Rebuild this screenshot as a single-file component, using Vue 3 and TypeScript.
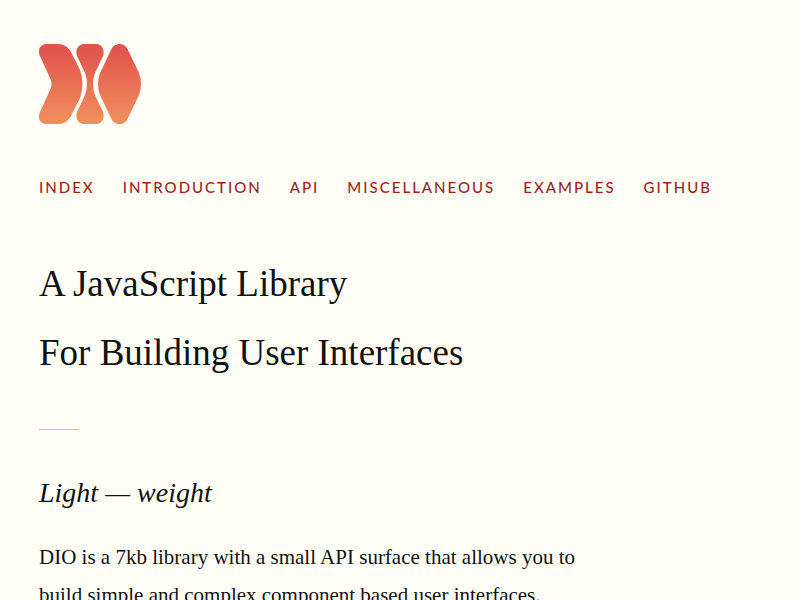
<script setup lang="ts">
interface NavItem {
  label: string
  href: string
}

const navItems: NavItem[] = [
  { label: 'Index', href: '#index' },
  { label: 'Introduction', href: '#introduction' },
  { label: 'API', href: '#api' },
  { label: 'Miscellaneous', href: '#miscellaneous' },
  { label: 'Examples', href: '#examples' },
  { label: 'GitHub', href: '#github' },
]
</script>

<template>
  <div class="page">
    <header>
      <a class="logo" href="#index" aria-label="DIO">
        <svg width="102" height="80" viewBox="0 0 102 80" aria-hidden="true">
          <defs>
            <linearGradient id="logo-fill" gradientUnits="userSpaceOnUse" x1="0" y1="0" x2="0" y2="80">
              <stop offset="0.1" stop-color="#e1564f" />
              <stop offset="0.95" stop-color="#f08e5b" />
            </linearGradient>
          </defs>
          <g fill="url(#logo-fill)">
            <path d="M8 0H19C25 0 29 3 32 8L41 26Q46 40 41 54L32 72C29 77 25 80 19 80H8C1 80-2 74 1 68L11 46Q14 40 11 34L1 12C-2 6 1 0 8 0Z" />
            <path d="M45 0H57C63 0 66 6 64 12L56 29Q52 40 56 51L64 68C66 74 63 80 57 80H45C39 80 36 74 38 68L46 51Q50 40 46 29L38 12C36 6 39 0 45 0Z" />
            <path d="M72 6C75-2 86-2 89 6L100 29Q104 40 100 51L89 74C86 82 75 82 72 74L61 51Q57 40 61 29Z" />
          </g>
        </svg>
      </a>
      <nav aria-label="Main">
        <a v-for="item in navItems" :key="item.label" :href="item.href">{{ item.label }}</a>
      </nav>
    </header>
    <main>
      <h1>A JavaScript Library<br />For Building User Interfaces</h1>
      <hr />
      <h2>Light — weight</h2>
      <p>
        DIO is a 7kb library with a small API surface that allows you to
        build simple and complex component based user interfaces.
      </p>
    </main>
  </div>
</template>

<style>
body {
  margin: 0;
  background: #fffff8;
}
</style>

<style scoped>
.page {
  padding: 44px 39px 0;
  color: #111;
  font-family: Palatino, "Palatino Linotype", "Liberation Serif", serif;
}

.logo,
.logo svg {
  display: block;
}

.logo {
  width: fit-content;
}

nav {
  display: flex;
  flex-wrap: wrap;
  gap: 28px;
  margin-top: 51px;
  font: 500 15px/24px "Gill Sans", Lato, sans-serif;
  letter-spacing: 2px;
  text-transform: uppercase;
}

nav a {
  color: #a11f1b;
  text-decoration: none;
}

h1 {
  margin: 50px 0 0;
  font-size: 37px;
  font-weight: 400;
  line-height: 69px;
}

hr {
  width: 40px;
  height: 1px;
  margin: 42px 0 0;
  border: 0;
  background: #c9c3a3;
}

h2 {
  margin: 44px 0 0;
  font-size: 28px;
  font-style: italic;
  font-weight: 400;
  line-height: 38px;
}

p {
  max-width: 560px;
  margin: 26px 0 0;
  font-size: 21px;
  line-height: 38px;
}
</style>
